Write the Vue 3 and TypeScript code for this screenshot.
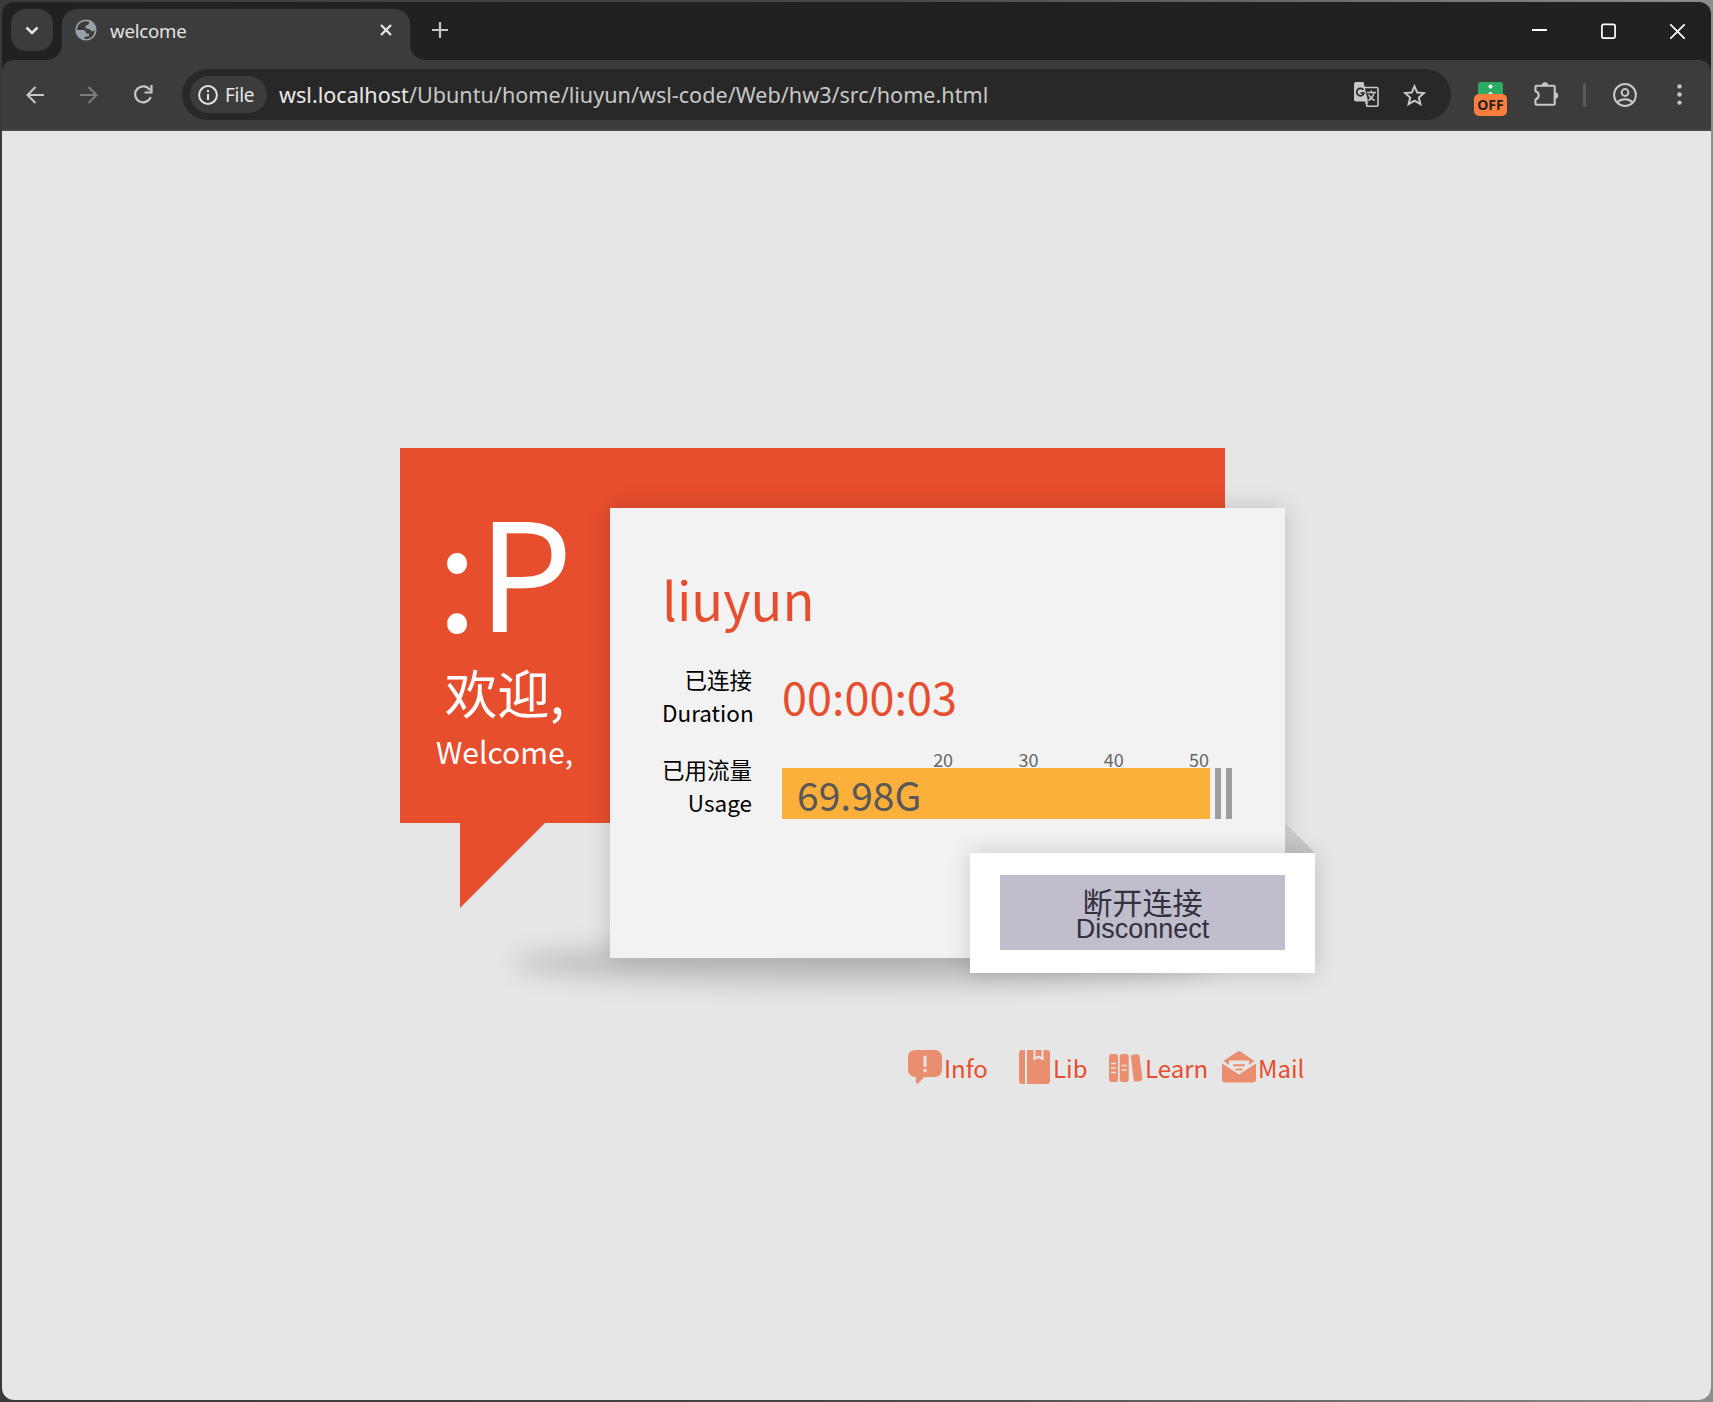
<script setup lang="ts">
interface Tick { value: number }
interface QuickLink { name: string; icon: string }

const ticks: Tick[] = [{ value: 20 }, { value: 30 }, { value: 40 }, { value: 50 }]
const links: QuickLink[] = [
  { name: 'Info', icon: 'info' },
  { name: 'Lib', icon: 'lib' },
  { name: 'Learn', icon: 'learn' },
  { name: 'Mail', icon: 'mail' },
]
</script>

<template>
  <div class="desktop">
    <div class="window">
      <header class="tabstrip">
        <button class="tab-search">
          <svg width="14" height="9" viewBox="0 0 14 9"><path d="M1.500 1.500 7 7l5.500-5.500" fill="none" stroke="#e3e3e3" stroke-width="2.500" /></svg>
        </button>
        <div class="tab">
          <svg class="globe" width="22" height="22" viewBox="0 0 22 22">
            <circle cx="11" cy="11" r="10.600" fill="#9aa0a8" />
            <path d="M11 2.300C5.500 2.300 2 6.500 2 11h5c2.500 0 4 1.500 4 3.500h3v3H9.500V20c6 .8 10.300-4 10.300-9-1.500 2-3.300 1.800-4.300 0-1-1.700-4.500-.5-5-2.500-.4-2 2-2.500 3.500-3.500V2.700z" fill="#3c3c3c" />
            <path d="M2 11h5c2.500 0 4 1.500 4 3.500v3H9.300V20C5.500 19.500 2 16 2 11z" fill="#9aa0a8" />
          </svg>
          <span class="tab-title">welcome</span>
          <svg class="tab-close" width="12" height="12" viewBox="0 0 12 12"><path d="M1 1l10 10M11 1 1 11" stroke="#e8e8e8" stroke-width="2.300" /></svg>
        </div>
        <svg class="new-tab" width="16" height="16" viewBox="0 0 16 16"><path d="M8 0v16M0 8h16" stroke="#c7c7c7" stroke-width="2.200" /></svg>
        <div class="controls">
          <svg width="15" height="17" viewBox="0 0 15 17"><path d="M0 7h15" stroke="#fff" stroke-width="2" /></svg>
          <svg width="15" height="17" viewBox="0 0 15 17"><rect x=".9" y="1.400" width="13.200" height="13.700" rx="1.800" fill="none" stroke="#fff" stroke-width="1.700" /></svg>
          <svg width="15" height="17" viewBox="0 0 15 17"><path d="M.3 1.300l14.400 14.400M14.700 1.300.3 15.700" stroke="#fff" stroke-width="1.800" /></svg>
        </div>
      </header>

      <div class="toolbar">
        <svg class="back" width="18" height="18" viewBox="0 0 18 18"><path d="M18 9H2M9.500 1 1.500 9l8 8" fill="none" stroke="#c7c7c7" stroke-width="2.100" /></svg>
        <svg class="forward" width="18" height="18" viewBox="0 0 18 18"><path d="M0 9h16M8.500 1l8 8-8 8" fill="none" stroke="#7b7b7b" stroke-width="2.100" /></svg>
        <svg class="reload" width="19" height="19" viewBox="0 0 19 19"><path d="M16.700 12A8 8 0 1 1 16 5.200M17.500 0v7.500H10.500" fill="none" stroke="#c7c7c7" stroke-width="2.200" /></svg>
        <div class="address">
          <div class="chip">
            <svg width="20" height="20" viewBox="0 0 20 20"><circle cx="10" cy="10" r="8.900" fill="none" stroke="#e3e3e3" stroke-width="2" /><path d="M10 9v6M10 5v2.200" stroke="#e3e3e3" stroke-width="2" /></svg>
            <span>File</span>
          </div>
          <span class="url"><b>wsl.localhost</b>/Ubuntu/home/liuyun/wsl-code/Web/hw3/src/home.html</span>
          <svg class="translate" width="25" height="25" viewBox="0 0 25 25">
            <path d="M8 5.500h14.800a1.200 1.200 0 0 1 1.200 1.200V23a1.200 1.200 0 0 1-1.200 1.200H13z" fill="none" stroke="#c7c7c7" stroke-width="1.600" />
            <path d="M2 0h7.500l4.600 19.500H2a2 2 0 0 1-2-2V2a2 2 0 0 1 2-2z" fill="#c7c7c7" />
            <path d="M9.500 8A3.700 3.700 0 1 0 10 11H6.500" fill="none" stroke="#282828" stroke-width="1.700" />
            <path d="M13 10.500h9M17.300 8.500v2M20 10.500c-.7 4-3 6.500-5.500 8M14.700 12.500c1.300 3 3.500 5 6 6" fill="none" stroke="#c7c7c7" stroke-width="1.500" />
            <path d="M12.500 20.300l2 0-2.500 4z" fill="#c7c7c7" />
          </svg>
          <svg class="star" width="23" height="22" viewBox="0 0 23 22"><path d="M11.500 2.300l2.700 6.200 6.700.6-5.100 4.400 1.600 6.600-5.900-3.500-5.900 3.500 1.600-6.600-5.100-4.400 6.700-.6z" fill="none" stroke="#c7c7c7" stroke-width="2" /></svg>
        </div>
        <div class="ext">
          <svg width="25" height="13" viewBox="0 0 25 13"><path d="M0 12V2.500A2.500 2.500 0 0 1 2.500 0h20A2.500 2.500 0 0 1 25 2.500V12z" fill="#2bac62" /><circle cx="12.500" cy="4.500" r="2" fill="#fff" /><path d="M10.500 12a2 2 0 0 1 4 0z" fill="#fff" /></svg>
          <span>OFF</span>
        </div>
        <svg class="puzzle" width="25" height="25" viewBox="0 0 25 25">
          <path d="M2.500 3.800h17.200a1 1 0 0 1 1 1v17a1 1 0 0 1-1 1H2.500a1 1 0 0 1-1-1V17.500a4.300 4.300 0 0 0 0-8.300V4.800a1 1 0 0 1 1-1z" fill="none" stroke="#c7c7c7" stroke-width="2.100" />
          <path d="M7.800 3.500a3.200 3.200 0 0 1 6.400 0zM21 10.300a3.200 3.200 0 0 1 0 6.400z" fill="#c7c7c7" />
        </svg>
        <i class="divider"></i>
        <svg class="avatar" width="24" height="24" viewBox="0 0 24 24"><circle cx="12" cy="12" r="10.900" fill="none" stroke="#c7c7c7" stroke-width="2" /><circle cx="12" cy="9.500" r="3.400" fill="none" stroke="#c7c7c7" stroke-width="2" /><path d="M4.500 19.300c4-4 11-4 15 0" fill="none" stroke="#c7c7c7" stroke-width="2" /></svg>
        <svg class="menu" width="5" height="21" viewBox="0 0 5 21"><g fill="#c7c7c7"><circle cx="2.500" cy="2.400" r="2.200" /><circle cx="2.500" cy="10.500" r="2.200" /><circle cx="2.500" cy="18.600" r="2.200" /></g></svg>
      </div>

      <main class="page">
        <section class="portal">
          <div class="bubble">
            <div class="greeting">
              <div class="face">:P</div>
              <div class="hello">欢迎,</div>
              <div class="hello-en">Welcome,</div>
            </div>
          </div>
          <i class="tail"></i>
          <i class="floor-shadow"></i>
          <div class="card">
            <h1>liuyun</h1>
            <div class="row">
              <div class="label">已连接<br>Duration</div>
              <div class="time">00:00:03</div>
            </div>
            <div class="row usage">
              <div class="label">已用流量<br>Usage</div>
              <div class="meter">
                <div class="ticks"><span v-for="t in ticks" :key="t.value">{{ t.value }}</span></div>
                <div class="bars">
                  <div class="bar">69.98G</div>
                  <i></i><i></i>
                </div>
              </div>
            </div>
          </div>
          <i class="fold"></i>
          <div class="action">
            <button><span class="cn">断开连接</span><span class="en">Disconnect</span></button>
          </div>
        </section>
        <nav class="links">
          <a v-for="l in links" :key="l.name" :class="l.icon">
            <svg v-if="l.icon === 'info'" width="34" height="34" viewBox="0 0 34 34"><path d="M7 0h20a7 7 0 0 1 7 7v13a7 7 0 0 1-7 7H16.500l-6 6c-1.300 1-2.500.5-2.500-1v-5H7a7 7 0 0 1-7-7V7a7 7 0 0 1 7-7z" fill="#e98f6f" /><path d="M17 7v8.500" stroke="#e6e6e6" stroke-width="3" stroke-linecap="round" /><circle cx="17" cy="20.500" r="1.800" fill="#e6e6e6" /></svg>
            <svg v-else-if="l.icon === 'lib'" width="32" height="34" viewBox="0 0 32 34"><path d="M3 0h3v34H3a3 3 0 0 1-3-3V3a3 3 0 0 1 3-3zM8 0h6.500v10.500l5-2.500 5 2.500V0H28a3 3 0 0 1 3 3v28a3 3 0 0 1-3 3H8zM16.500 0h6v7l-3-1.500-3 1.500z" fill="#e98f6f" /></svg>
            <svg v-else-if="l.icon === 'learn'" width="34" height="28" viewBox="0 0 34 28"><g fill="#e98f6f"><rect width="9" height="28" rx="2.500" /><rect x="10.700" width="9" height="28" rx="2.500" /><rect x="23.300" y=".5" width="8.700" height="27" rx="2.500" transform="rotate(-7 27.500 14)" /></g><path d="M2 9.500h5M2 14h5M2 18.500h5M12.700 11.500h5M12.700 16h5" stroke="#e6e6e6" stroke-width="1.500" /></svg>
            <svg v-else width="34" height="32" viewBox="0 0 34 32"><path d="M1.500 10 14.500 1.200a4 4 0 0 1 5 0L32.500 10l-5.500 4V9.500H7V14zM0 12.500 17 23.500l17-11V28.500a3 3 0 0 1-3 3H3a3 3 0 0 1-3-3z" fill="#e98f6f" /><path d="M11 14.300h12M13.500 18.500h7" stroke="#e98f6f" stroke-width="1.900" /></svg>
            <span>{{ l.name }}</span>
          </a>
        </nav>
      </main>
    </div>
  </div>
</template>

<style>
body { margin: 0; background: #454646; overflow: hidden; }
</style>

<style scoped>
* { box-sizing: border-box; }
svg { display: block; flex: none; }
i { display: block; }
button { border: 0; padding: 0; }
.desktop { width: 1713px; height: 1402px; padding: 2px; background: linear-gradient(90deg, #3a3a3b 0, #454646 50%, #8d8d8d 100%); }
.window { width: 1709px; height: 1398px; border-radius: 12px; overflow: hidden; background: #202221; display: flex; flex-direction: column; font-family: "Noto Sans", sans-serif; }
.tabstrip { height: 58px; display: flex; align-items: flex-start; padding: 7px 0 0 9px; }
.tab-search { width: 42px; height: 42px; border-radius: 15px; background: #3c3c3c; display: flex; align-items: center; justify-content: center; }
.tab { position: relative; width: 348px; height: 51px; margin-left: 9px; border-radius: 15px 15px 0 0; background: #3c3c3c; display: flex; align-items: center; padding: 0 18px 9px 13px; }
.tab::before, .tab::after { content: ""; position: absolute; bottom: 0; width: 15px; height: 15px; }
.tab::before { left: -15px; background: radial-gradient(circle at 0 0, transparent 14.500px, #3c3c3c 15.200px); }
.tab::after { right: -15px; background: radial-gradient(circle at 100% 0, transparent 14.500px, #3c3c3c 15.200px); }
.tab-title { margin-left: 13px; padding-top: 2px; font-size: 18.600px; letter-spacing: -.2px; line-height: 26px; color: #e3e3e3; flex: 1; }
.new-tab { margin: 13px 0 0 22px; }
.controls { margin-left: auto; display: flex; gap: 54px; padding: 14px 26px 0 0; }
.toolbar { height: 71px; background: #3c3c3c; border-radius: 12px 12px 0 0; display: flex; align-items: center; padding: 0 0 2px; box-shadow: inset 0 -2px #474747; }
.back { margin-left: 24px; }
.forward { margin-left: 36px; }
.reload { margin-left: 36px; }
.address { margin-left: 29px; width: 1269px; height: 51px; border-radius: 26px; background: #282828; display: flex; align-items: center; padding: 0 25px 0 8px; }
.chip { width: 77px; height: 37px; border-radius: 19px; background: #3c3c3c; display: flex; align-items: center; padding-left: 8px; gap: 7px; font-size: 19px; color: #e3e3e3; }
.chip span { letter-spacing: -.3px; }
.url { margin-left: 12px; padding-bottom: 1px; font-size: 21.600px; color: #c7c7c7; white-space: nowrap; flex: 1; }
.url b { font-weight: 400; color: #e8e8e8; }
.star { margin-left: 24px; }
.ext { width: 33px; margin-left: 23px; display: flex; flex-direction: column; align-items: center; padding-top: 9px; }
.ext span { width: 33px; height: 22px; margin-top: -1px; border-radius: 5px; background: #ff7e3e; color: #222; font: 700 14px/22px "Noto Sans", sans-serif; text-align: center; }
.puzzle { margin-left: 27px; }
.divider { width: 3px; height: 24px; background: #5b5b5b; margin-left: 24px; border-radius: 2px; }
.avatar { margin-left: 27px; }
.menu { margin-left: 40px; }
.page { flex: 1; background: #e6e6e6; font-family: "Noto Sans CJK SC", sans-serif; padding: 317px 0 0 398px; }
.portal { position: relative; width: 915px; height: 525px; padding: 60px 0 0 210px; }
.bubble { position: absolute; left: 0; top: 0; width: 825px; height: 375px; background: #e74e2e; }
.greeting { width: 209px; text-align: center; color: #fff; padding-top: 44px; }
.face { font-size: 150px; line-height: 150px; margin-bottom: 12px; }
.hello { font-size: 52.500px; line-height: 75px; margin-bottom: 1px; }
.hello-en { font-size: 30px; line-height: 43px; }
.tail { position: absolute; left: 60px; top: 375px; width: 85px; height: 85px; background: #e74e2e; clip-path: polygon(0 0, 100% 0, 0 100%); }
.floor-shadow { position: absolute; left: 112px; top: 493px; width: 700px; height: 44px; border-radius: 50%; background: rgba(0,0,0,.16); filter: blur(12px); }
.card { position: relative; width: 675px; height: 450px; background: #f2f2f2; box-shadow: 0 0 22px rgba(0,0,0,.17); padding: 52px 0 0 52px; }
h1 { margin: 0; font-size: 52.500px; font-weight: 400; line-height: 76px; color: #e74e2e; }
.row { display: flex; margin-top: 27px; }
.label { width: 90px; text-align: right; font-size: 22.500px; line-height: 32.500px; color: #000; white-space: nowrap; }
.time { margin-left: 30px; font-size: 45px; line-height: 65px; color: #e74e2e; }
.usage { margin-top: 25px; }
.meter { margin-left: 30px; width: 450px; }
.ticks { display: flex; justify-content: flex-end; width: 427px; height: 19px; margin-top: -4px; }
.ticks span { width: 85.300px; text-align: right; font-size: 18px; line-height: 20px; color: #666; }
.bars { display: flex; gap: 5px; }
.bar { width: 428px; height: 51px; padding-left: 15px; background: #fbb03b; color: #595757; font-size: 39px; line-height: 53px; }
.bars i { width: 6px; height: 51px; background: #9f9d9e; }
.fold { position: absolute; left: 885px; top: 375px; width: 30px; height: 30px; background: #c8c8c8; clip-path: polygon(0 0, 100% 100%, 0 100%); }
.action { position: absolute; left: 570px; top: 405px; width: 345px; height: 120px; padding: 22px 30px; background: #fff; box-shadow: 0 0 22px rgba(0,0,0,.17); }
.action button { width: 285px; height: 75px; background: #c0bdcc; color: #333040; display: flex; flex-direction: column; align-items: center; justify-content: center; }
.cn { font: 30px/30px "Noto Sans CJK SC", sans-serif; }
.en { font: 27px/27px "Liberation Sans", sans-serif; margin-bottom: -3px; }
.links { display: flex; margin: 77px 0 0 508px; }
.links a { display: flex; height: 36px; color: #e74e2e; font-size: 24px; line-height: 35px; }
.info { width: 111px; }
.lib { width: 90px; }
.learn { width: 113px; }
.links span { margin-left: 2px; }
.learn svg { margin-top: 4px; }
.mail svg { margin-top: 1px; }
</style>
